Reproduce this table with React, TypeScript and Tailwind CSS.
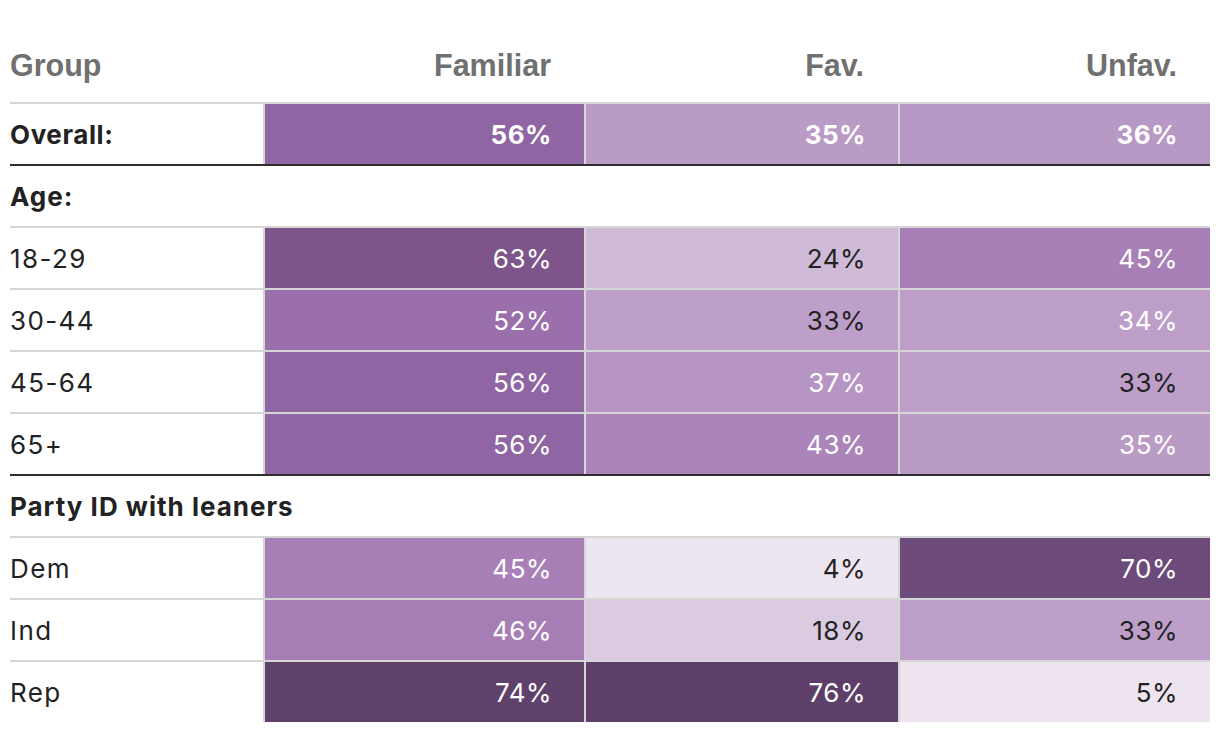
import React from "react";

type Cell = { v: string; bg: string; dark?: boolean };
type Row =
  | { kind: "data"; label: string; cells: Cell[]; bold?: boolean; topDark?: boolean }
  | { kind: "group"; label: string };

const rows: Row[] = [
  {
    kind: "data",
    label: "Overall:",
    bold: true,
    cells: [
      { v: "56%", bg: "#9065a3" },
      { v: "35%", bg: "#ba9bc6" },
      { v: "36%", bg: "#b898c5" },
    ],
  },
  { kind: "group", label: "Age:" },
  {
    kind: "data",
    label: "18-29",
    cells: [
      { v: "63%", bg: "#7d558b" },
      { v: "24%", bg: "#cfbad7", dark: true },
      { v: "45%", bg: "#a87fb6" },
    ],
  },
  {
    kind: "data",
    label: "30-44",
    cells: [
      { v: "52%", bg: "#9a6fab" },
      { v: "33%", bg: "#bd9fc9", dark: true },
      { v: "34%", bg: "#bc9ec8" },
    ],
  },
  {
    kind: "data",
    label: "45-64",
    cells: [
      { v: "56%", bg: "#9065a3" },
      { v: "37%", bg: "#b694c3" },
      { v: "33%", bg: "#bd9fc9", dark: true },
    ],
  },
  {
    kind: "data",
    label: "65+",
    cells: [
      { v: "56%", bg: "#9065a3" },
      { v: "43%", bg: "#ab85ba" },
      { v: "35%", bg: "#ba9bc6" },
    ],
  },
  { kind: "group", label: "Party ID with leaners" },
  {
    kind: "data",
    label: "Dem",
    cells: [
      { v: "45%", bg: "#a880b7" },
      { v: "4%", bg: "#ede5f0", dark: true },
      { v: "70%", bg: "#6c4a79" },
    ],
  },
  {
    kind: "data",
    label: "Ind",
    cells: [
      { v: "46%", bg: "#a77db5" },
      { v: "18%", bg: "#dbcbe1", dark: true },
      { v: "33%", bg: "#bd9fc9", dark: true },
    ],
  },
  {
    kind: "data",
    label: "Rep",
    cells: [
      { v: "74%", bg: "#60416b" },
      { v: "76%", bg: "#5d3f69" },
      { v: "5%", bg: "#ede4f0", dark: true },
    ],
  },
];

const widths = ["w-[321px]", "w-[314px]", "w-[312px]"];

export default function App() {
  return (
    <div className="w-[1220px] h-[732px] bg-white overflow-hidden">
      <div
        className="ml-[10px] w-[1200px]"
        style={{ fontFamily: "Inter, 'Liberation Sans', sans-serif" }}
      >
        <div
          className="flex h-[102px] pt-[30px] items-center text-[30.5px] font-bold text-[#707070]"
          style={{ fontFamily: "'Liberation Sans', Arial, sans-serif" }}
        >
          <div className="w-[253px]">Group</div>
          <div className="w-[321px] text-right pr-[33px]">Familiar</div>
          <div className="w-[314px] text-right pr-[34px]">Fav.</div>
          <div className="w-[312px] text-right pr-[33px]">Unfav.</div>
        </div>
        {rows.map((r, i) => {
          if (r.kind === "group") {
            return (
              <div
                key={i}
                className="flex h-[62px] items-center border-t-2 border-[#2e2e2e] text-[26px] font-bold text-[#222] tracking-[1px]"
              >
                {r.label}
              </div>
            );
          }
          return (
            <div
              key={i}
              className="flex h-[62px] border-t-2 border-[#d6d6d6] text-[26px] text-[#222]"
            >
              <div
                className={`w-[253px] flex items-center ${r.bold ? "font-bold tracking-[0.6px]" : "tracking-[1.4px]"}`}
              >
                {r.label}
              </div>
              {r.cells.map((c, j) => (
                <div
                  key={j}
                  className={`${widths[j]} border-l-2 border-[#d6d6d6] flex items-center justify-end pr-[32px] tracking-[0.5px] ${
                    c.dark ? "text-[#222]" : "text-white"
                  } ${r.bold ? "font-bold" : ""}`}
                  style={{ backgroundColor: c.bg }}
                >
                  {c.v}
                </div>
              ))}
            </div>
          );
        })}
      </div>
    </div>
  );
}
